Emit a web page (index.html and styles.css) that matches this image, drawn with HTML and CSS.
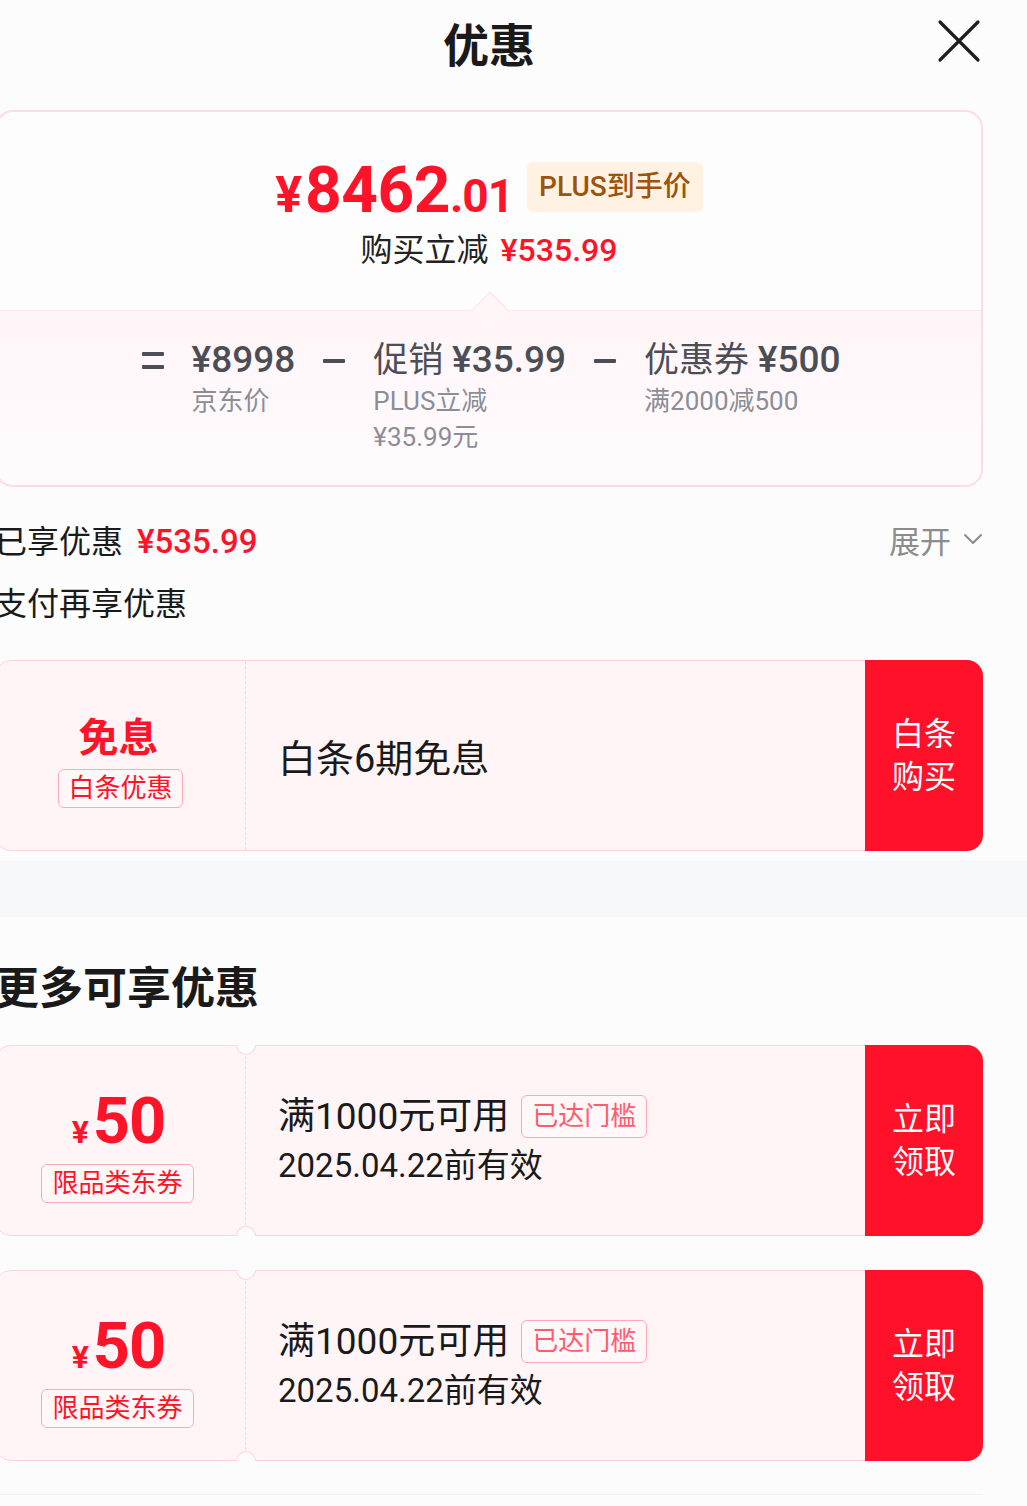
FILE: index.html
```html
<!DOCTYPE html>
<html lang="zh-CN">
<head>
<meta charset="utf-8">
<title>优惠</title>
<link rel="stylesheet" href="styles.css">
</head>
<body>
<div class="page">
  <header class="header">
    <h1 class="title">优惠</h1>
    <svg class="close" viewBox="0 0 44 44" width="44" height="44"><path d="M3 3 L41 41 M41 3 L3 41" stroke="#1e1e1e" stroke-width="3.2" stroke-linecap="round" fill="none"/></svg>
  </header>

  <section class="summary">
    <div class="summary-top">
      <div class="price-row">
        <span class="price"><span class="yen">¥</span><span class="int">8462</span><span class="dec">.01</span></span>
        <span class="plus-tag">PLUS到手价</span>
      </div>
      <div class="save-row">购买立减 <span class="red">¥535.99</span></div>
    </div>
    <div class="summary-bottom">
      <span class="notch"></span>
      <div class="calc">
        <span class="op op-eq" aria-label="="></span>
        <div class="term">
          <div class="term-main"><b>¥8998</b></div>
          <div class="term-sub">京东价</div>
        </div>
        <span class="op op-minus" aria-label="−"></span>
        <div class="term">
          <div class="term-main">促销 <b>¥35.99</b></div>
          <div class="term-sub">PLUS立减</div>
          <div class="term-sub">¥35.99元</div>
        </div>
        <span class="op op-minus" aria-label="−"></span>
        <div class="term">
          <div class="term-main">优惠券 <b>¥500</b></div>
          <div class="term-sub">满2000减500</div>
        </div>
      </div>
    </div>
  </section>

  <div class="enjoyed">
    <div class="enjoyed-left">已享优惠 <span class="red">¥535.99</span></div>
    <div class="expand">展开 <svg viewBox="0 0 20 12" width="20" height="12"><path d="M2 2 L10 10 L18 2" stroke="#8c8c8c" stroke-width="2" fill="none" stroke-linecap="round" stroke-linejoin="round"/></svg></div>
  </div>
  <div class="pay-title">支付再享优惠</div>

  <div class="card baitiao">
    <div class="card-left">
      <div class="free">免息</div>
      <span class="tag">白条优惠</span>
    </div>
    <div class="card-mid">
      <div class="mid-big">白条6期免息</div>
    </div>
    <div class="card-btn">白条<br>购买</div>
  </div>
</div>

<div class="band"></div>

<div class="page">
  <h2 class="more-title">更多可享优惠</h2>

  <div class="card coupon">
    <span class="hole hole-top"></span>
    <span class="hole hole-bottom"></span>
    <div class="card-left">
      <div class="amount"><span class="a-yen">¥</span><span class="a-num">50</span></div>
      <span class="tag">限品类东券</span>
    </div>
    <div class="card-mid">
      <div class="mid-line">满1000元可用 <span class="tag light">已达门槛</span></div>
      <div class="mid-line date">2025.04.22前有效</div>
    </div>
    <div class="card-btn">立即<br>领取</div>
  </div>

  <div class="card coupon">
    <span class="hole hole-top"></span>
    <span class="hole hole-bottom"></span>
    <div class="card-left">
      <div class="amount"><span class="a-yen">¥</span><span class="a-num">50</span></div>
      <span class="tag">限品类东券</span>
    </div>
    <div class="card-mid">
      <div class="mid-line">满1000元可用 <span class="tag light">已达门槛</span></div>
      <div class="mid-line date">2025.04.22前有效</div>
    </div>
    <div class="card-btn">立即<br>领取</div>
  </div>
  <div class="bottom-line"></div>
</div>
</body>
</html>
```

FILE: styles.css
```css
* { box-sizing: border-box; }
html, body {
  margin: 0;
  padding: 0;
  background: #fcfcfc;
  overflow: hidden;
}
body {
  font-family: "Roboto", "Noto Sans CJK SC", sans-serif;
  color: #1a1a1a;
  width: 1027px;
}
.page {
  margin-left: -5px;
  width: 988px;
}
.red { color: #ff1329; }

/* header */
.header {
  position: relative;
  height: 84px;
  display: flex;
  align-items: center;
  justify-content: center;
}
.title {
  margin: 0;
  font-family: "Noto Sans CJK SC", sans-serif;
  font-size: 46px;
  font-weight: 700;
  line-height: 84px;
  color: #1a1a1a;
}
.close {
  position: absolute;
  right: 2px;
  top: 19px;
}

/* summary card */
.summary {
  margin-top: 26px;
  border: 2px solid #ffdbe3;
  border-radius: 18px;
  overflow: hidden;
  background: #fdfdfd;
}
.summary-top {
  padding-top: 38px;
  padding-bottom: 42px;
  display: flex;
  flex-direction: column;
  align-items: center;
}
.price-row {
  height: 76px;
  display: flex;
  align-items: center;
  gap: 14px;
}
.price {
  color: #ff1329;
  font-weight: 700;
  display: flex;
  align-items: baseline;
  line-height: 1;
  padding-top: 6px;
}
.yen { font-size: 50px; margin-right: 3px; }
.int { font-size: 64px; letter-spacing: -0.5px; }
.dec { font-size: 46px; letter-spacing: -1px; }
.plus-tag {
  background: #fff2e2;
  color: #9c530b;
  font-size: 28px;
  font-weight: 500;
  line-height: 50px;
  padding: 0 12px;
  border-radius: 6px;
  margin-top: -2px;
}
.save-row {
  margin-top: 6px;
  font-size: 32px;
  line-height: 36px;
  color: #222;
}
.save-row .red { font-weight: 500; margin-left: 4px; }

.summary-bottom {
  position: relative;
  border-top: 1px solid #ffe7ed;
  background: linear-gradient(#fff5f8, #fffbfc);
  padding: 27px 0 30px;
}
.notch {
  position: absolute;
  left: 480px;
  top: -14px;
  width: 26px;
  height: 26px;
  background: #fff6f8;
  border-top: 1px solid #ffe1e8;
  border-left: 1px solid #ffe1e8;
  transform: rotate(45deg);
}
.calc {
  display: flex;
  justify-content: center;
  align-items: flex-start;
  gap: 28px;
  color: #4b4e55;
  padding-left: 4px;
}
.op {
  width: 22px;
  height: 44px;
  display: flex;
  flex-direction: column;
  justify-content: center;
  gap: 9px;
  flex: none;
}
.op::before,
.op-eq::after {
  content: "";
  display: block;
  height: 4px;
  background: #4b4e55;
  border-radius: 1px;
}
.op-minus { padding-top: 1px; }
.term-main {
  font-size: 35px;
  line-height: 44px;
  white-space: nowrap;
}
.term-main b {
  font-weight: 500;
  font-size: 37px;
}
.term-sub {
  font-size: 26px;
  line-height: 36px;
  color: #8b8e97;
}

/* enjoyed */
.enjoyed {
  margin-top: 30px;
  display: flex;
  justify-content: space-between;
  align-items: center;
  height: 44px;
}
.enjoyed-left {
  font-size: 32px;
  color: #1a1a1a;
}
.enjoyed-left .red { font-weight: 500; margin-left: 6px; font-size: 33px; }
.expand {
  font-size: 31px;
  color: #8c8c8c;
  display: flex;
  align-items: center;
  gap: 12px;
}
.pay-title {
  margin-top: 21px;
  font-size: 32px;
  line-height: 44px;
  color: #1a1a1a;
}

/* cards */
.card {
  position: relative;
  display: flex;
  height: 191px;
  border: 1px solid #ffd3dd;
  border-radius: 16px;
  background: #fff5f7;
}
.baitiao { margin-top: 34px; }
.card-left {
  width: 250px;
  flex: none;
  border-right: 1.5px dashed #ffd3dd;
  display: flex;
  flex-direction: column;
  align-items: center;
  justify-content: center;
  padding-top: 9px;
}
.free {
  font-family: "Noto Sans CJK SC", sans-serif;
  font-size: 40px;
  font-weight: 700;
  color: #ff1329;
  line-height: 46px;
  margin-left: -4px;
}
.tag {
  display: inline-block;
  border: 1px solid #ffa9b7;
  border-radius: 6px;
  color: #ff1329;
  font-size: 26px;
  line-height: 37px;
  padding: 0 9px;
  margin-top: 11px;
  background: #fff7f8;
}
.card-mid {
  flex: 1;
  display: flex;
  flex-direction: column;
  justify-content: center;
  padding-left: 32px;
}
.mid-big {
  font-size: 38px;
  color: #1a1a1a;
}
.card-btn {
  width: 118px;
  flex: none;
  margin: -1px -1px -1px 0;
  background: #ff1229;
  border-radius: 0 16px 16px 0;
  color: #fff;
  font-size: 32px;
  line-height: 43px;
  display: flex;
  align-items: center;
  justify-content: center;
  text-align: center;
}

.band {
  height: 56px;
  margin-top: 10px;
  background: #f7f8fa;
}

.more-title {
  margin: 40px 0 0;
  font-family: "Noto Sans CJK SC", sans-serif;
  font-size: 44px;
  font-weight: 700;
  line-height: 56px;
  color: #1a1a1a;
}

.coupon { margin-top: 32px; }
.coupon + .coupon { margin-top: 34px; }
.coupon .card-left {
  padding-top: 14px;
}
.amount {
  color: #ff1329;
  font-weight: 700;
  display: flex;
  align-items: baseline;
  line-height: 56px;
  margin-left: -4px;
}
.a-yen { font-size: 32px; margin-right: 4px; }
.a-num { font-size: 65px; letter-spacing: -1px; }
.coupon .tag { margin-top: 4px; margin-left: -6px; padding: 0 10px; }
.mid-line {
  font-size: 37px;
  line-height: 49px;
  color: #1a1a1a;
  display: flex;
  align-items: center;
  white-space: nowrap;
}
.mid-line .tag {
  margin: 0 0 0 12px;
  line-height: 41px;
  color: #ff5b6f;
  font-size: 26px;
}
.date { font-size: 33px; }

.hole {
  position: absolute;
  left: 240px;
  width: 20px;
  height: 10px;
  background: #fcfcfc;
  border: 1px solid #ffd3dd;
  z-index: 2;
}
.hole-top {
  top: -1px;
  border-top: none;
  border-radius: 0 0 10px 10px;
}
.hole-bottom {
  bottom: -1px;
  border-bottom: none;
  border-radius: 10px 10px 0 0;
}
.bottom-line {
  margin-top: 33px;
  height: 1px;
  background: #f0f0f2;
}
```
